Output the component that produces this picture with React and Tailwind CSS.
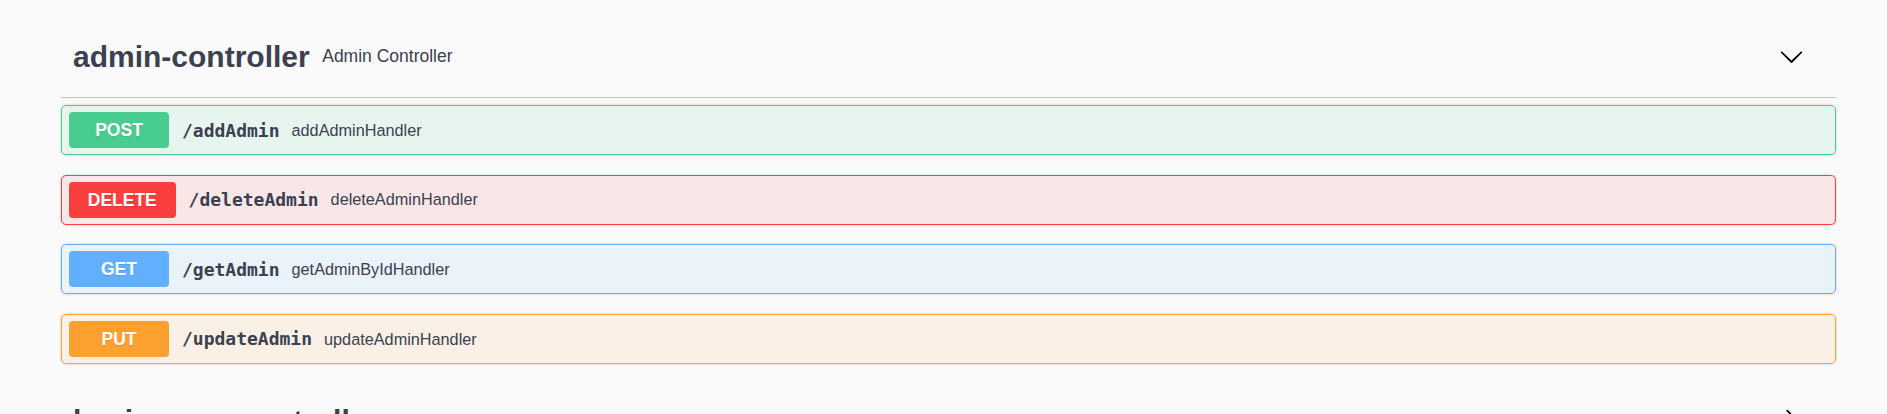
import React from 'react'

const ops = [
    {method: 'POST', path: '/addAdmin', summary: 'addAdminHandler', badge: 'bg-[#49cc90]', row: 'bg-[rgba(73,204,144,0.1)] border-[#49cc90]'},
    {method: 'DELETE', path: '/deleteAdmin', summary: 'deleteAdminHandler', badge: 'bg-[#f93e3e]', row: 'bg-[rgba(249,62,62,0.1)] border-[#f93e3e]'},
    {method: 'GET', path: '/getAdmin', summary: 'getAdminByIdHandler', badge: 'bg-[#61affe]', row: 'bg-[rgba(97,175,254,0.1)] border-[#61affe]'},
    {method: 'PUT', path: '/updateAdmin', summary: 'updateAdminHandler', badge: 'bg-[#fca130]', row: 'bg-[rgba(252,161,48,0.1)] border-[#fca130]'},
]

const ArrowDown = () => (
    <svg width="25" height="25" viewBox="0 0 20 20" className="shrink-0">
        <path d="M17.418 6.109c.272-.268.709-.268.979 0s.271.701 0 .969l-7.908 7.83c-.27.268-.707.268-.979 0l-7.908-7.83c-.27-.268-.27-.701 0-.969.271-.268.709-.268.979 0L10 13.25l7.418-7.141z" fill="#000"/>
    </svg>
)

const ArrowRight = () => (
    <svg width="25" height="25" viewBox="0 0 20 20" className="shrink-0">
        <path d="M13.25 10L6.109 2.58c-.268-.27-.268-.707 0-.979.268-.27.701-.27.969 0l7.83 7.908c.268.271.268.709 0 .979l-7.83 7.908c-.268.271-.701.27-.969 0-.268-.269-.268-.707 0-.979L13.25 10z" fill="#000"/>
    </svg>
)

const TagHeader = ({name, desc, open}) => (
    <div className="h-[83px] flex items-center border-b border-[rgba(59,65,81,0.3)] pl-[12px] pr-[32px] text-[#3b4151]">
        <span className="text-[30px] font-bold font-['Liberation_Sans',Arial,sans-serif]">{name}</span>
        <span className="flex-1 pl-[12.5px] text-[17.5px] font-['Liberation_Sans',Arial,sans-serif]">{desc}</span>
        {open ? <ArrowDown/> : <ArrowRight/>}
    </div>
)

const OpRow = ({op}) => (
    <div className={`h-[50px] flex items-center pl-[7px] border rounded-[5px] shadow-[0_0_3px_rgba(0,0,0,0.19)] ${op.row}`}>
        <div className={`h-[36px] min-w-[100px] px-[18.75px] rounded-[4px] flex items-center justify-center text-white text-[17.5px] font-bold font-['Liberation_Sans',Arial,sans-serif] [text-shadow:0_1px_0_rgba(0,0,0,0.1)] ${op.badge}`}>
            {op.method}
        </div>
        <span className="pl-[13px] pr-[12px] text-[18px] font-bold text-[#3b4151] font-['DejaVu_Sans_Mono',monospace]">{op.path}</span>
        <span className="text-[16.25px] text-[#3b4151] font-['Liberation_Sans',Arial,sans-serif]">{op.summary}</span>
    </div>
)

const App = () => {
    return (
        <div className="min-h-screen h-[414px] overflow-hidden bg-[#fafafa] pl-[61px] pr-[51px] pt-[15px]">
            <TagHeader name="admin-controller" desc="Admin Controller" open/>
            <div className="mt-[7px] flex flex-col gap-[19.67px]">
                {ops.map((op, index) =>
                    <OpRow op={op} key={index}/>
                )}
            </div>
            <div className="mt-[16px]">
                <TagHeader name="basic-error-controller" desc="Basic Error Controller"/>
            </div>
        </div>
    )
}
export default App
